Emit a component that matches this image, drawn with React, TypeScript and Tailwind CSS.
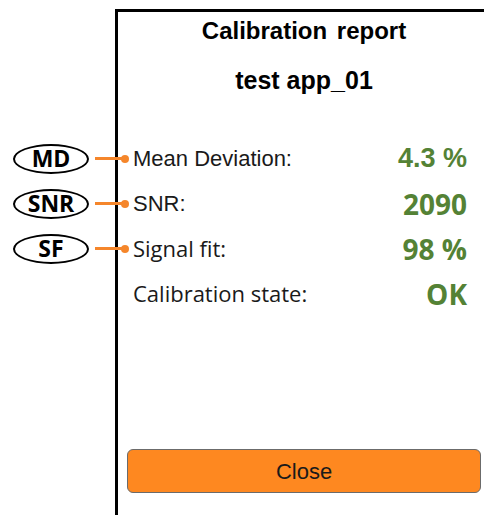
import React from "react";

type Row = {
  label: string;
  value: string;
  badge?: string;
  labelFont: string;
  valueFont: string;
};

const rows: Row[] = [
  { label: "Mean Deviation:", value: "4.3 %", badge: "MD", labelFont: "font-['Liberation_Sans',sans-serif] text-[22px]", valueFont: "font-['Liberation_Sans',sans-serif] text-[27px]" },
  { label: "SNR:", value: "2090", badge: "SNR", labelFont: "font-['Liberation_Sans',sans-serif] text-[22px]", valueFont: "font-['Open_Sans',sans-serif] text-[28px]" },
  { label: "Signal fit:", value: "98 %", badge: "SF", labelFont: "font-['Open_Sans',sans-serif] text-[22px]", valueFont: "font-['Open_Sans',sans-serif] text-[28px]" },
  { label: "Calibration state:", value: "OK", labelFont: "font-['Open_Sans',sans-serif] text-[22px]", valueFont: "font-['Open_Sans',sans-serif] text-[28px]" },
];

function Badge({ text }: { text: string }) {
  return (
    <div className="absolute left-[-105px] top-1/2 flex -translate-y-1/2 items-center">
      <div className="flex h-[30px] w-[76px] items-center justify-center rounded-[50%] border-2 border-black bg-white font-['Open_Sans',sans-serif] text-[23px] font-bold leading-none text-black">
        {text}
      </div>
      <div className="ml-[6px] h-[3px] w-[30px] bg-[#f5862b]" />
      <div className="ml-[-4px] h-[8px] w-[8px] rounded-full bg-[#f5862b]" />
    </div>
  );
}

export default function App() {
  return (
    <div className="h-[515px] w-[484px] overflow-hidden bg-white">
      <div className="ml-[115px] mt-[9px] h-[540px] w-[378px] border-[3px] border-black">
        <div className="pt-[7px] text-center font-['Liberation_Sans',sans-serif] text-[24px] font-bold leading-[24px] text-black [word-spacing:3px]">
          Calibration report
        </div>
        <div className="mt-[25px] text-center font-['Liberation_Sans',sans-serif] text-[25px] font-bold leading-[24px] text-black">
          test app_01
        </div>

        <div className="mt-[44px]">
          {rows.map((r) => (
            <div key={r.label} className="relative flex h-[45px] items-center justify-between pl-[15px] pr-[23px]">
              {r.badge ? <Badge text={r.badge} /> : null}
              <span className={`${r.labelFont} text-[#1a1a1a]`}>{r.label}</span>
              <span className={`${r.valueFont} font-bold text-[#548235]`}>{r.value}</span>
            </div>
          ))}
        </div>

        <div className="mt-[133px] px-[9px]">
          <button
            type="button"
            className="flex h-[44px] w-full items-center justify-center rounded-[6px] border border-[#6b6b6b] bg-[#fe8820] font-['Liberation_Sans',sans-serif] text-[22px] text-[#1a1a1a]"
          >
            Close
          </button>
        </div>
      </div>
    </div>
  );
}
